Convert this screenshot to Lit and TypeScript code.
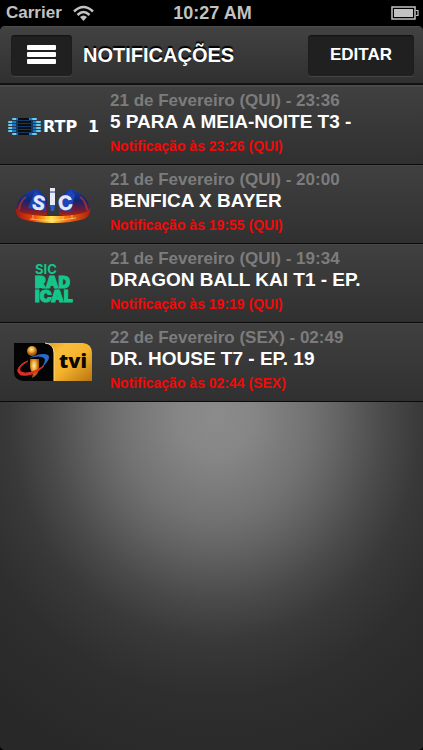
import { LitElement, html, svg, css } from "lit";
import { customElement, property } from "lit/decorators.js";

interface Notice {
  channel: string;
  date: string;
  title: string;
  alert: string;
}

const notices: Notice[] = [
  { channel: "rtp1", date: "21 de Fevereiro (QUI) - 23:36", title: "5 PARA A MEIA-NOITE T3 -", alert: "Notificação às 23:26 (QUI)" },
  { channel: "sic", date: "21 de Fevereiro (QUI) - 20:00", title: "BENFICA X BAYER", alert: "Notificação às 19:55 (QUI)" },
  { channel: "radical", date: "21 de Fevereiro (QUI) - 19:34", title: "DRAGON BALL KAI T1 - EP.", alert: "Notificação às 19:19 (QUI)" },
  { channel: "tvi", date: "22 de Fevereiro (SEX) - 02:49", title: "DR. HOUSE T7 - EP. 19", alert: "Notificação às 02:44 (SEX)" },
];

@customElement("channel-logo")
export class ChannelLogo extends LitElement {
  @property() channel = "";

  static styles = css`
    :host { display: block; }
    svg { display: block; width: 100%; height: auto; }
    .rtp { font: 700 16px "DejaVu Sans", sans-serif; fill: #fff; }
    .sic { font: 800 20px Inter, sans-serif; fill: #e2e8f4; }
    .sic-top { font: 700 13px Inter, sans-serif; fill: #15c68b; }
    .sic-block { font: 900 16px Inter, sans-serif; fill: #15c68b; stroke: #15c68b; stroke-width: 1; }
    .tvi { font: 800 20px "Open Sans", sans-serif; fill: #0b0800; }
  `;

  private rtp1() {
    const rows = [0, 1, 2, 3, 4, 5];
    return svg`
      <path d="M13 33h22v15H13z" fill="#123a63"/>
      ${rows.map((i) => {
        const inset = i === 0 || i === 5 ? 4 : 0;
        const y = 32 + i * 3;
        return svg`
          <rect x=${8 + inset} y=${y} width="5" height="2" rx="1" fill="#6accf2"/>
          <rect x=${12 + inset} y=${y} width="4" height="2" fill="#1f78bf"/>
          <rect x="18" y=${y} width="13" height="2" fill="#0a0d12"/>
          <rect x=${33 - inset} y=${y} width="4" height="2" fill="#1f78bf"/>
          <rect x=${36 - inset} y=${y} width="5" height="2" rx="1" fill="#6accf2"/>`;
      })}
      <text class="rtp" x="43" y="46">RTP</text>
      <text class="rtp" x="88" y="46">1</text>`;
  }

  private sic() {
    return svg`
      <defs>
        <linearGradient id="ring" x1="0" x2="1">
          <stop offset="0" stop-color="#a3190c"/><stop offset=".22" stop-color="#e5400d"/>
          <stop offset=".4" stop-color="#ffb41c"/><stop offset=".48" stop-color="#ffe552"/>
          <stop offset=".68" stop-color="#f5720f"/><stop offset="1" stop-color="#ae1d0c"/>
        </linearGradient>
        <linearGradient id="dome" x1="0" x2="0" y1="0" y2="1">
          <stop offset="0" stop-color="#1b3fa8"/><stop offset=".45" stop-color="#14246f"/>
          <stop offset=".8" stop-color="#6d1b38"/><stop offset="1" stop-color="#a3240f"/>
        </linearGradient>
      </defs>
      <path d="M16 46Q17 32 30 26L38 24 47 33V50H20Z" fill="url(#dome)"/>
      <path d="M90 46Q89 32 76 26L69 24 59 33V50H86Z" fill="url(#dome)"/>
      <path d="M16 43Q15 51 22 54Q35 58 53 58Q71 58 84 54Q91 51 90 43Q87 48 79 49Q68 51 53 51Q38 51 27 49Q19 48 16 43Z" fill="url(#ring)"/>
      <path d="M30 54Q53 57 76 53" fill="none" stroke="#fff0a0" stroke-width="1" opacity=".6"/>
      <path d="M33 50v4M46 51v5M63 51v4M72 50v4" stroke="#ffd27a" opacity=".7"/>
      <path d="M19 45q1-9 7-13M87 45q-1-9-7-13" fill="none" stroke="#d43a1c" stroke-width="2" opacity=".6"/>
      <path d="M28 43l7-17 10 6 1 14z" fill="#1b45b8"/>
      <path d="M59 34l12-9 4 5-4 16-12-1z" fill="#1b45b8"/>
      <path d="M50 23h5v17h-5z" fill="#e6ebf5"/>
      <path d="M50 27h5" stroke="#1e3a9a"/>
      <path d="M50 40h5l-1 6h-3z" fill="#295ad0"/>
      <text class="sic" x="32" y="45" transform="rotate(10 38 38)">S</text>
      <text class="sic" x="58" y="45" transform="rotate(-8 66 38)">C</text>`;
  }

  private radical() {
    return svg`
      <text class="sic-top" x="35" y="30">SIC</text>
      <path d="M36 33h6v11h-6z" fill="#15c68b"/>
      <text class="sic-block" x="35" y="44">RAD</text>
      <text class="sic-block" x="35" y="58">ICAL</text>`;
  }

  private tvi() {
    return svg`
      <defs>
        <linearGradient id="gold" x1="0" x2="1" y1="0" y2="1">
          <stop offset="0" stop-color="#e69b1c"/><stop offset=".25" stop-color="#f8bd3b"/>
          <stop offset=".55" stop-color="#f5b32c"/><stop offset="1" stop-color="#b77410"/>
        </linearGradient>
        <radialGradient id="ball" cx=".45" cy=".35">
          <stop offset="0" stop-color="#fff0b4"/><stop offset=".5" stop-color="#eea938"/><stop offset="1" stop-color="#a95c0a"/>
        </radialGradient>
      </defs>
      <path d="M46 20H83Q92 21 92 30V58H54Z" fill="url(#gold)"/>
      <path d="M14 20H45Q54 21 54 30V58H23Q14 57 14 49Z" fill="#050404"/>
      <path d="M45 20Q54 21 54 30V58" fill="none" stroke="#fbd98a"/>
      <circle cx="32" cy="28" r="5" fill="url(#ball)"/>
      <path d="M30 36h9v8q0 8-7 11l1-5q-3-2-3-7z" fill="url(#ball)"/>
      <path d="M29 35Q42 29 48 32Q52 36 40 46Q47 38 44 35Q40 32 29 35Z" fill="#286bc8"/>
      <path d="M28 38Q16 45 21 49Q28 53 44 43Q33 54 21 52Q14 48 22 41Q25 39 28 38Z" fill="#e12d28" stroke="#e12d28" stroke-width="1"/>
      <text class="tvi" x="59" y="45">tvi</text>`;
  }

  render() {
    const art =
      this.channel === "rtp1" ? this.rtp1() :
      this.channel === "sic" ? this.sic() :
      this.channel === "radical" ? this.radical() : this.tvi();
    return html`<svg viewBox="0 0 106 78" aria-hidden="true">${art}</svg>`;
  }
}

@customElement("app-root")
export class AppRoot extends LitElement {
  static styles = css`
    :host {
      display: flex;
      flex-direction: column;
      min-height: 100vh;
      background: #000;
      color: #fff;
      font-family: "Liberation Sans", Arial, sans-serif;
      font-weight: 700;
    }
    .status {
      display: grid;
      grid-template-columns: 1fr auto 1fr;
      align-items: center;
      height: 26px;
      padding: 0 4px 0 6px;
      color: #c2c2c2;
      font-size: 18px;
      line-height: 26px;
    }
    .carrier { display: flex; align-items: center; gap: 11px; font-size: 17px; }
    .wifi { width: 21px; height: 16px; }
    .battery { width: 28px; height: 14px; justify-self: end; }
    .screen {
      flex: 1;
      display: flex;
      flex-direction: column;
      border-radius: 5px;
      overflow: hidden;
      background: #282828;
    }
    .bar {
      display: flex;
      align-items: center;
      gap: 11px;
      height: 57px;
      box-sizing: border-box;
      padding: 0 9px 0 11px;
      background: linear-gradient(#424242, #303030);
      border-top: 1px solid #4c4c4c;
    }
    h1 {
      flex: 1;
      margin: 0;
      font-size: 20px;
      line-height: 24px;
      font-weight: 700;
      text-shadow: 0 -2px 1px #000;
    }
    button {
      height: 41px;
      padding: 0;
      border: 0;
      border-radius: 4px;
      background: #202020;
      box-shadow: inset 0 1px 1px #121212, 0 1px 0 #454545;
      color: #fff;
      font: inherit;
      font-size: 17px;
      line-height: 24px;
    }
    .menu { display: grid; place-items: center; width: 61px; }
    .menu svg { width: 29px; height: 20px; }
    .edit { width: 106px; }
    ul {
      margin: 0;
      padding: 1px 0 0;
      list-style: none;
      border-top: 2px solid #111;
      background: #4a4a4a;
    }
    li {
      display: flex;
      height: 79px;
      box-sizing: border-box;
      border-bottom: 1px solid #0a0a0a;
      background: linear-gradient(#484848 0 1px, #404040 1px, #303030);
    }
    channel-logo { flex: none; width: 106px; }
    .info { min-width: 0; padding: 4px 8px 0 4px; white-space: nowrap; }
    .info p, .info h2 { margin: 0; }
    .date { color: #7c7c7c; font-size: 17px; line-height: 22px; }
    h2 { font-size: 19px; line-height: 20px; font-weight: 700; }
    .alert { color: #f00a08; font-size: 14px; line-height: 28px; }
    .backdrop {
      flex: 1;
      background: radial-gradient(ellipse 74% 98% at 51% 4%, #8b8b8b 0%, #868686 12%, #727272 30%, #646464 39%, #4a4a4a 54%, #393939 66%, #2e2e2e 83%, #282828 110%);
    }
  `;

  render() {
    return html`
      <div class="status">
        <span class="carrier">Carrier
          <svg class="wifi" viewBox="0 0 21 16" aria-hidden="true" fill="none" stroke="#c2c2c2" stroke-width="2.500">
            <path d="M1 6.500Q10.500-2.500 20 6.500"/>
            <path d="M4.500 10Q10.500 4 16.500 10"/>
            <path d="M7 12Q10.500 9 14 12L10.500 16Z" fill="#c2c2c2" stroke="none"/>
          </svg>
        </span>
        <span>10:27 AM</span>
        <svg class="battery" viewBox="0 0 28 14" aria-hidden="true">
          <rect x="1" y="1" width="23" height="12" fill="none" stroke="#c2c2c2" stroke-width="1.500"/>
          <rect x="3" y="3" width="19" height="8" fill="#c2c2c2"/>
          <path d="M25 4.500h2v5h-2" fill="none" stroke="#c2c2c2" stroke-width="1.200"/>
        </svg>
      </div>
      <div class="screen">
        <header class="bar">
          <button class="menu" aria-label="Menu">
            <svg viewBox="0 0 29 20" aria-hidden="true" fill="#fff">
              <rect width="29" height="5" rx="1"/>
              <rect y="7" width="29" height="5" rx="1"/>
              <rect y="14" width="29" height="5" rx="1"/>
            </svg>
          </button>
          <h1>NOTIFICAÇÕES</h1>
          <button class="edit">EDITAR</button>
        </header>
        <ul>
          ${notices.map(
            (n) => html`
              <li>
                <channel-logo channel=${n.channel}></channel-logo>
                <div class="info">
                  <p class="date">${n.date}</p>
                  <h2>${n.title}</h2>
                  <p class="alert">${n.alert}</p>
                </div>
              </li>`,
          )}
        </ul>
        <div class="backdrop"></div>
      </div>
    `;
  }
}
